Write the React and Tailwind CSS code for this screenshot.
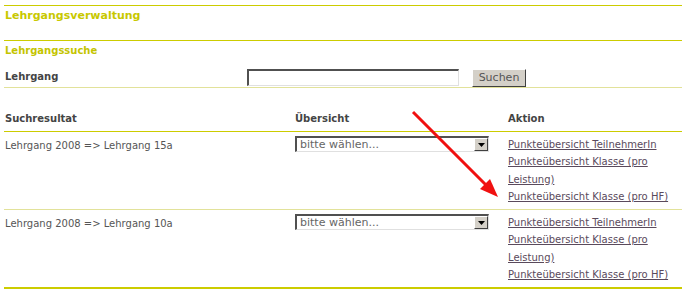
import React from 'react';

const links = [
  'Punkteübersicht TeilnehmerIn',
  'Punkteübersicht Klasse (pro Leistung)',
  'Punkteübersicht Klasse (pro HF)',
];

const results = ['Lehrgang 2008 => Lehrgang 15a', 'Lehrgang 2008 => Lehrgang 10a'];

const SelectBox = () => (
  <div className="flex h-[16px] w-[194px] items-stretch border-t-2 border-l-2 border-t-[#505050] border-l-[#505050] border-b border-r border-b-[#e0e0e0] border-r-[#e0e0e0] bg-white">
    <span className="flex-1 pl-[3px] text-[11px] leading-[13px] text-[#666]">bitte wählen...</span>
    <span className="flex w-[14px] items-center justify-center border border-t-white border-l-white border-b-[#404040] border-r-[#404040] bg-[#d4d0c8]">
      <svg width="7" height="4" viewBox="0 0 7 4">
        <path d="M0 0h7L3.5 4z" fill="#000" />
      </svg>
    </span>
  </div>
);

const ResultRow = ({ label, last }) => (
  <div
    className={`flex pt-[4px] ${last ? 'h-[79px] border-b-2 border-[#cccc00]' : 'h-[78px] border-b border-[#e2e29a]'}`}
  >
    <div className="w-[291px] pl-[1px] pt-[2px] text-[10px] leading-[16px] text-[#555]">{label}</div>
    <div className="w-[213px]">
      <SelectBox />
    </div>
    <div className="w-[166px] text-[10px] leading-[17.3px]">
      {links.map((l) => (
        <div key={l}>
          <a href="#" className="text-[#5a4a5c] underline underline-offset-[1px]">
            {l}
          </a>
        </div>
      ))}
    </div>
  </div>
);

export default function App() {
  return (
    <div className="relative h-[291px] w-[690px] overflow-hidden bg-white font-['DejaVu_Sans',Verdana,sans-serif]">
      <div className="ml-[4px] w-[678px] pt-[5px]">
        <div className="h-[35px] border-t border-[#cccc00] pt-[2px] pl-[1px] text-[11px] font-bold leading-[16px] text-[#c8c800]">
          Lehrgangsverwaltung
        </div>
        <div className="border-t border-[#cccc00] pt-[3px] pl-[1px] text-[10px] font-bold leading-[14px] text-[#c4c400]">
          Lehrgangssuche
        </div>
        <div className="mt-[11px] flex h-[19px] items-start border-b border-[#e2e29a]">
          <div className="w-[243px] pl-[1px] pt-[1px] text-[10px] font-bold leading-[14px] text-[#444]">
            Lehrgang
          </div>
          <input
            className="h-[17px] w-[212px] border-t-2 border-l-2 border-t-[#505050] border-l-[#505050] border-b border-r border-b-[#e0e0e0] border-r-[#e0e0e0] bg-white outline-none"
            type="text"
          />
          <button className="ml-[13px] h-[18px] w-[54px] border border-t-white border-l-white border-b-[#404040] border-r-[#404040] bg-[#d4d0c8] text-[11px] leading-[14px] text-[#555]">
            Suchen
          </button>
        </div>
        <div className="mt-[23px] flex h-[21px] border-b border-[#cccc00] pt-[1px] text-[10px] font-bold leading-[14px] text-[#444]">
          <div className="w-[291px] pl-[1px]">Suchresultat</div>
          <div className="w-[213px]">Übersicht</div>
          <div>Aktion</div>
        </div>
        {results.map((r, i) => (
          <ResultRow key={r} label={r} last={i === results.length - 1} />
        ))}
      </div>
      <svg className="pointer-events-none absolute left-0 top-0" width="690" height="291">
        <line x1="413" y1="112" x2="488" y2="187" stroke="#f01010" strokeWidth="3" />
        <path d="M498 197 L480 189 L490 179 Z" fill="#f01010" />
      </svg>
    </div>
  );
}
